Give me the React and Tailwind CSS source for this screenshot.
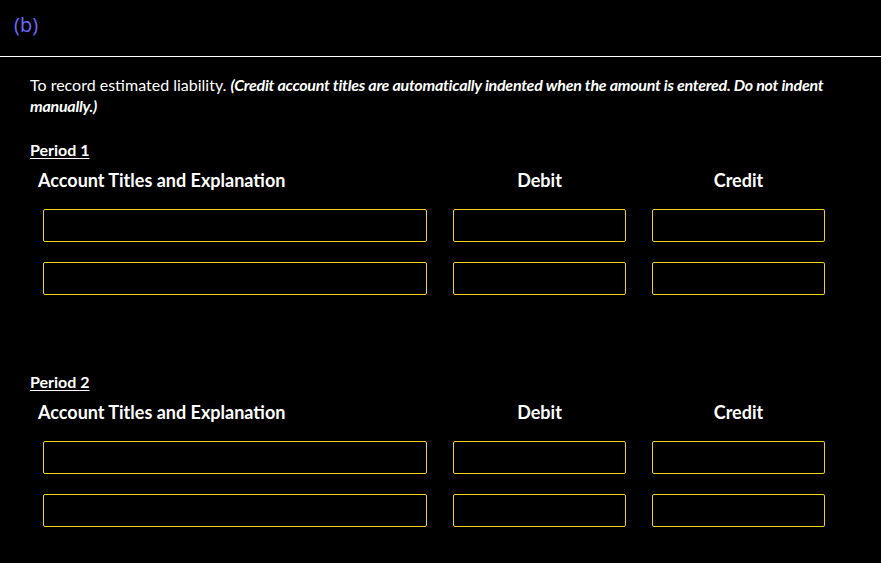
const periods = ["Period 1", "Period 2"];

const Field = () => (
    <div className="px-[13px]">
        <input className="block w-full h-[33px] bg-black border border-[#f2d21a] rounded-[2px] outline-none" />
    </div>
);

const EntryTable = () => (
    <div className="mt-[7px]">
        <div className="grid grid-cols-[410px_199px_199px] h-[26px] items-center text-[18px] font-bold text-white">
            <div className="pl-2">Account Titles and Explanation</div>
            <div className="text-center">Debit</div>
            <div className="text-center">Credit</div>
        </div>
        <div className="flex flex-col gap-[20px] pt-[16px]">
            {[0, 1].map(row => (
                <div key={row} className="grid grid-cols-[410px_199px_199px]">
                    <Field />
                    <Field />
                    <Field />
                </div>
            ))}
        </div>
    </div>
);

const App = () => {
    return (
        <div className="min-h-[563px] bg-black text-white font-['Lato',sans-serif]">
            {/* Part label */}
            <div className="h-[56px] pl-[14px] pt-[12px] text-[20px] leading-[26px] text-[#6a6aff] font-['Open_Sans',sans-serif]">(b)</div>
            <div className="h-px bg-white" />

            <div className="pl-[30px] pr-[40px] pt-[17px]">
                <p className="text-[16px] leading-[21px]">
                    To record estimated liability.{" "}
                    <b className="italic tracking-[-0.25px]">
                        (Credit account titles are automatically indented when the amount is entered. Do not indent manually.)
                    </b>
                </p>

                {periods.map((p, i) => (
                    <div key={p} className={i === 0 ? "mt-[24px]" : "mt-[77px]"}>
                        <div className="text-[16px] font-bold underline underline-offset-2 leading-[20px]">{p}</div>
                        <EntryTable />
                    </div>
                ))}
            </div>
        </div>
    );
};

export default App;
